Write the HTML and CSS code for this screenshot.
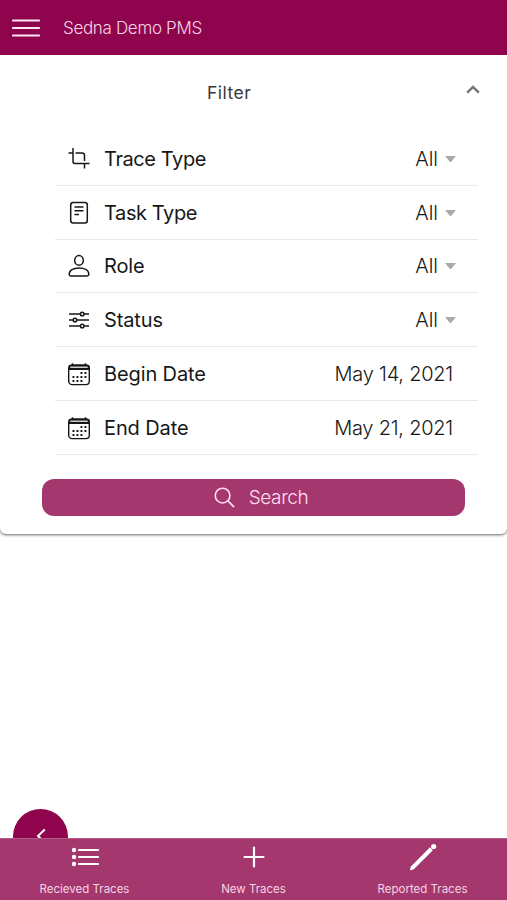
FILE: index.html
```html
<!DOCTYPE html>
<html lang="en">
<head>
<meta charset="utf-8">
<title>Sedna Demo PMS</title>
<link rel="stylesheet" href="styles.css">
</head>
<body>
<svg width="0" height="0" class="defs">
  <symbol id="calendar" viewBox="0 0 24 24">
    <rect x="1.700" y="3" width="20.600" height="19.600" rx="3.400" fill="none" stroke="currentColor" stroke-width="1.400"/>
    <path d="M2.500 3.700h19v3h-19z" fill="#ccc"/>
    <path d="M2 7.300h20M5.500 1.200v2M18.500 1.200v2" fill="none" stroke="currentColor" stroke-width="1.400"/>
    <path d="M13.500 11h6.500M5.500 15h14.500M5.500 19h10.500" fill="none" stroke="currentColor" stroke-width="1.900" stroke-dasharray="1.900 2.100"/>
  </symbol>
</svg>
<div class="app">
  <header class="bar">
    <svg class="menu" viewBox="0 0 28 18"><path d="M1 1.500h26M1 9h26M1 16.500h26"/></svg>
    <span class="app-name">Sedna Demo PMS</span>
  </header>
  <main class="main">
    <section class="card">
      <div class="card-head">
        <h1 class="card-title">Filter</h1>
        <svg class="chevron" viewBox="0 0 14 9"><path d="M1.200 7.700 7 1.900l5.800 5.800"/></svg>
      </div>
      <div class="list">
        <div class="row">
          <svg class="icon" viewBox="0 0 24 24"><path d="M6 1v13.500q0 2 2 2h14.500M1.500 6h4.500M8.500 6H15q2.500 0 2.500 2.500V14M17.500 16.500v5"/></svg>
          <span class="label tight">Trace Type</span><span class="value">All</span><i class="caret"></i>
        </div>
        <div class="row">
          <svg class="icon" viewBox="0 0 24 24"><rect x="3.700" y="1.500" width="16.600" height="20.500" rx="2.500"/><path d="M7.500 6h9M7.500 9.800h9M7.500 13.600h4.500"/></svg>
          <span class="label tight">Task Type</span><span class="value">All</span><i class="caret"></i>
        </div>
        <div class="row">
          <svg class="icon" viewBox="0 0 24 24"><ellipse cx="12" cy="6.400" rx="4.300" ry="4.800"/><path d="M2.200 20.300c0-4 4-6.300 9.800-6.300s9.800 2.300 9.800 6.300q0 1.600-1.700 1.600H3.900q-1.700 0-1.700-1.600z"/></svg>
          <span class="label">Role</span><span class="value">All</span><i class="caret"></i>
        </div>
        <div class="row">
          <svg class="icon" viewBox="0 0 24 24"><path d="M2 6h11.300M17.200 6H22M2 12h4M10 12h12M2 18h11.300M17.200 18H22"/><circle cx="15.200" cy="6" r="1.800"/><circle cx="8" cy="12" r="1.800"/><circle cx="15.200" cy="18" r="1.800"/></svg>
          <span class="label">Status</span><span class="value">All</span><i class="caret"></i>
        </div>
        <div class="row">
          <svg class="icon"><use href="#calendar"/></svg>
          <span class="label">Begin Date</span><span class="value date">May 14, 2021</span>
        </div>
        <div class="row">
          <svg class="icon"><use href="#calendar"/></svg>
          <span class="label">End Date</span><span class="value date">May 21, 2021</span>
        </div>
      </div>
      <button class="search" type="button">
        <svg class="search-icon" viewBox="0 0 22 22"><circle cx="9" cy="9" r="7.700"/><path d="m14.600 14.600 6 6"/></svg>
        <span>Search</span>
      </button>
    </section>
    <div class="fab"><svg class="fab-icon" viewBox="0 0 10 16"><path d="M8.800 1.500 2 8l6.800 6.500"/></svg></div>
  </main>
  <nav class="tabs">
    <a class="tab"><svg class="tab-icon" viewBox="0 0 28 28"><path d="M8 7h19M8 14h19M8 21h19"/><g class="solid"><circle cx="3" cy="7" r="2.200"/><circle cx="3" cy="14" r="2.200"/><circle cx="3" cy="21" r="2.200"/></g></svg><span>Recieved Traces</span></a>
    <a class="tab"><svg class="tab-icon" viewBox="0 0 28 28"><path d="M14 4.500v19M4.500 14h19"/></svg><span>New Traces</span></a>
    <a class="tab"><svg class="tab-icon" viewBox="0 0 28 28"><g class="solid"><path d="M1.900 23.400 21 4.300l2.900 2.900L4.800 26.300l-3 1q-.9.100-.8-.8z"/><circle cx="24.700" cy="3.500" r="2.600"/></g></svg><span>Reported Traces</span></a>
  </nav>
</div>
</body>
</html>
```
FILE: styles.css
```css
* { box-sizing: border-box; }
body { margin: 0; background: #fff; font-family: Inter, "Liberation Sans", sans-serif; }
.defs { position: absolute; }
.app { height: 900px; display: flex; flex-direction: column; overflow: hidden; }

.bar { height: 54.500px; flex: none; display: flex; align-items: center; padding: 2px 0 0 12px; background: #8f054d; color: #f8d4e7; }
.menu { width: 28px; height: 18px; fill: none; stroke: #ffe6f4; stroke-width: 2.200; stroke-linecap: round; }
.app-name { margin-left: 23px; font-size: 17px; letter-spacing: -0.330px; font-weight: 350; }

.main { flex: 1; min-height: 0; overflow: hidden; display: flex; flex-direction: column; justify-content: space-between; }
.card { height: 479.500px; padding-top: 23px; border-radius: 0 0 6px 6px; box-shadow: 0 1px 3px rgba(0, 0, 0, .6); }
.card-head { height: 54.500px; display: grid; grid-template-columns: 1fr 14px; padding: 0 27px 0 0; }
.card-title { margin: 4px 0 0; padding-left: 207px; font-size: 17.500px; line-height: 22px; font-weight: 400; letter-spacing: 0.500px; color: #383838; }
.chevron { width: 14px; height: 9px; margin-top: 7px; fill: none; stroke: #757575; stroke-width: 2.500; }

.list { width: 423px; margin-left: 55px; }
.row { height: 53.800px; display: flex; align-items: center; padding: 1px 22px 0 12px; border-bottom: 1px solid #e8e8e8; color: #171717; }
.icon { width: 24px; height: 24px; flex: none; fill: none; stroke: currentColor; stroke-width: 1.500; }
.label { margin-left: 13px; font-size: 20px; letter-spacing: -0.120px; }
.tight { letter-spacing: -0.400px; }
.value { margin-left: auto; font-size: 20px; font-weight: 350; }
.date { padding-right: 3px; letter-spacing: -0.230px; }
.caret { width: 11px; margin-left: 7px; border: 5.500px solid transparent; border-top: 6px solid #aaa; border-bottom: 0; }

.search { width: 423px; height: 37px; margin: 24px 0 0 42px; padding: 0 0 0 15px; border: 0; border-radius: 12px; background: #a4386e; color: #ffdff0; font: 350 19px Inter, sans-serif; letter-spacing: -0.400px; display: flex; align-items: center; justify-content: center; gap: 14px; }
.search-icon { width: 21px; height: 21px; fill: none; stroke: currentColor; stroke-width: 1.700; stroke-linecap: round; }

.fab { width: 55px; height: 55px; flex: none; margin: 0 0 -25.500px 13px; border-radius: 50%; background: #8f054d; display: flex; align-items: center; justify-content: center; }
.fab-icon { width: 10px; height: 16px; fill: none; stroke: #fff; stroke-width: 2; }

.tabs { height: 62px; flex: none; display: grid; grid-template-columns: repeat(3, 1fr); background: #a4386e; border-top: 1px solid #b5598a; }
.tab { display: flex; flex-direction: column; align-items: center; color: #f7d3e5; font-size: 11.500px; line-height: 15px; white-space: nowrap; }
.tab-icon { width: 28px; height: 28px; margin: 4px 0 11px; fill: none; stroke: #fff; stroke-width: 2.200; stroke-linecap: round; }
.solid { fill: #fff; stroke: none; }
```
